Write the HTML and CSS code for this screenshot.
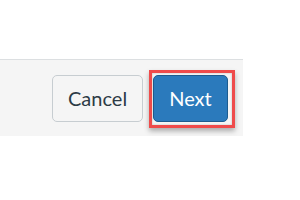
FILE: index.html
```html
<!DOCTYPE html>
<html lang="en">
<head>
    <meta charset="UTF-8">
    <meta name="viewport" content="width=device-width, initial-scale=1.0">
    <title>Dialog footer</title>
    <link rel="stylesheet" href="styles.css">
</head>
<body>
    <div class="page">
        <div class="footer">
            <button class="btn cancel">Cancel</button>
            <button class="btn next">Next</button>
        </div>
    </div>
</body>
</html>
```

FILE: styles.css
```css
body {
    margin: 0;
    padding: 0;
    background: #fff;
    font-family: Lato, "Liberation Sans", sans-serif;
}
.page {
    padding-top: 59px;
    width: 243px;
}
.footer {
    display: flex;
    justify-content: flex-end;
    align-items: center;
    gap: 10px;
    height: 76px;
    padding: 0 15px;
    background-color: #f5f5f5;
    border-top: 1px solid #dcdfe1;
}
.btn {
    height: 47px;
    font-family: inherit;
    font-size: 20px;
    border-radius: 5px;
    padding: 0 15px;
    cursor: pointer;
}
.cancel {
    width: 91px;
    background-color: #f5f5f5;
    color: #2d3b45;
    border: 1px solid #c7cdd1;
}
.next {
    position: relative;
    width: 75px;
    background-color: #2b7abc;
    color: #fff;
    border: 1px solid #1d5c8f;
}
.next::after {
    content: "";
    position: absolute;
    top: -6px;
    left: -5px;
    right: -8px;
    bottom: -7px;
    border: 3px solid #ef4b4b;
    box-shadow: 0 3px 5px rgba(0, 0, 0, 0.3), inset 0 0 2px rgba(0, 0, 0, 0.25);
}
```
